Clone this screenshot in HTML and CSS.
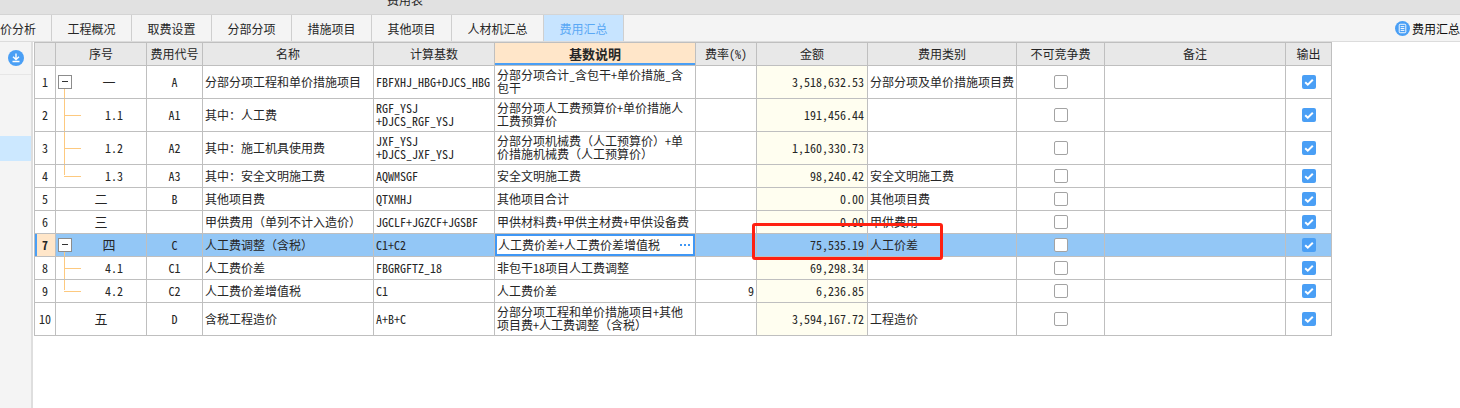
FILE: index.html
```html
<!DOCTYPE html>
<html lang="zh-CN">
<head>
<meta charset="utf-8">
<title>费用汇总</title>
<link rel="stylesheet" href="styles.css">
</head>
<body>
<div class="app">
  <div class="titlebar"><span class="title">费用表</span></div>
  <nav class="tabs">
    <span class="tab tab-first">价分析</span>
    <span class="tab">工程概况</span>
    <span class="tab">取费设置</span>
    <span class="tab">分部分项</span>
    <span class="tab">措施项目</span>
    <span class="tab">其他项目</span>
    <span class="tab tab-wide">人材机汇总</span>
    <span class="tab tab-active">费用汇总</span>
    <span class="tool">
      <svg class="tool-icon" viewBox="0 0 16 16"><circle cx="8" cy="8" r="8" fill="#4a9ff5"/><rect x="4.5" y="3.5" width="7" height="9" rx="1" fill="none" stroke="#fff"/><path d="M6 6h4M6 8h4M6 10h4" stroke="#fff"/></svg>费用汇总
    </span>
  </nav>
  <div class="main">
    <aside class="side">
      <div class="side-top">
        <svg class="side-icon" viewBox="0 0 16 16"><circle cx="8" cy="8" r="8" fill="#4a9ff5"/><path d="M8 3.5v5.5M5 6.8L8 9.5l3-2.7M4.5 11.5h7" fill="none" stroke="#fff" stroke-width="1.4"/></svg>
      </div>
      <div class="side-sel"></div>
    </aside>
    <div class="grid-wrap">
      <table class="grid">
        <colgroup>
          <col class="c-n"><col class="c-seq"><col class="c-code"><col class="c-name"><col class="c-base"><col class="c-desc"><col class="c-rate"><col class="c-amt"><col class="c-type"><col class="c-nc"><col class="c-note"><col class="c-out">
        </colgroup>
        <thead>
          <tr class="r-s">
            <th></th><th>序号</th><th>费用代号</th><th>名称</th><th>计算基数</th><th class="th-sel">基数说明</th><th>费率(%)</th><th>金额</th><th>费用类别</th><th>不可竞争费</th><th>备注</th><th>输出</th>
          </tr>
        </thead>
        <tbody>
          <tr class="r-t">
            <td class="num">1</td>
            <td class="seq seq-box"><span class="box"></span><span class="tl-down"></span>一</td>
            <td class="ctr">A</td><td>分部分项工程和单价措施项目</td><td>FBFXHJ_HBG+DJCS_HBG</td><td>分部分项合计_含包干+单价措施_含<br>包干</td><td></td>
            <td class="amt">3,518,632.53</td><td>分部分项及单价措施项目费</td>
            <td class="ctr"><span class="cb"></span></td><td></td>
            <td class="ctr"><span class="cb cb-on"><svg viewBox="0 0 14 14"><path d="M3.2 7.2l2.6 2.5 5-5" fill="none" stroke="#fff" stroke-width="2"/></svg></span></td>
          </tr>
          <tr class="r-t">
            <td class="num">2</td>
            <td class="seq seq-sub"><span class="tl-full"></span><span class="tl-h"></span>1.1</td>
            <td class="ctr">A1</td><td>其中<span class="fw">&#xFF1A;</span>人工费</td><td>RGF_YSJ<br>+DJCS_RGF_YSJ</td><td>分部分项人工费预算价+单价措施人<br>工费预算价</td><td></td>
            <td class="amt">191,456.44</td><td></td>
            <td class="ctr"><span class="cb"></span></td><td></td>
            <td class="ctr"><span class="cb cb-on"><svg viewBox="0 0 14 14"><path d="M3.2 7.2l2.6 2.5 5-5" fill="none" stroke="#fff" stroke-width="2"/></svg></span></td>
          </tr>
          <tr class="r-t">
            <td class="num">3</td>
            <td class="seq seq-sub"><span class="tl-full"></span><span class="tl-h"></span>1.2</td>
            <td class="ctr">A2</td><td>其中<span class="fw">&#xFF1A;</span>施工机具使用费</td><td>JXF_YSJ<br>+DJCS_JXF_YSJ</td><td>分部分项机械费<span class="fw">&#xFF08;</span>人工预算价<span class="fw">&#xFF09;</span>+单<br>价措施机械费<span class="fw">&#xFF08;</span>人工预算价<span class="fw">&#xFF09;</span></td><td></td>
            <td class="amt">1,160,330.73</td><td></td>
            <td class="ctr"><span class="cb"></span></td><td></td>
            <td class="ctr"><span class="cb cb-on"><svg viewBox="0 0 14 14"><path d="M3.2 7.2l2.6 2.5 5-5" fill="none" stroke="#fff" stroke-width="2"/></svg></span></td>
          </tr>
          <tr class="r-s">
            <td class="num">4</td>
            <td class="seq seq-sub"><span class="tl-up"></span><span class="tl-h"></span>1.3</td>
            <td class="ctr">A3</td><td>其中<span class="fw">&#xFF1A;</span>安全文明施工费</td><td>AQWMSGF</td><td>安全文明施工费</td><td></td>
            <td class="amt">98,240.42</td><td>安全文明施工费</td>
            <td class="ctr"><span class="cb"></span></td><td></td>
            <td class="ctr"><span class="cb cb-on"><svg viewBox="0 0 14 14"><path d="M3.2 7.2l2.6 2.5 5-5" fill="none" stroke="#fff" stroke-width="2"/></svg></span></td>
          </tr>
          <tr class="r-s">
            <td class="num">5</td><td class="ctr big">二</td>
            <td class="ctr">B</td><td>其他项目费</td><td>QTXMHJ</td><td>其他项目合计</td><td></td>
            <td class="amt">0.00</td><td>其他项目费</td>
            <td class="ctr"><span class="cb"></span></td><td></td>
            <td class="ctr"><span class="cb cb-on"><svg viewBox="0 0 14 14"><path d="M3.2 7.2l2.6 2.5 5-5" fill="none" stroke="#fff" stroke-width="2"/></svg></span></td>
          </tr>
          <tr class="r-s">
            <td class="num">6</td><td class="ctr big">三</td>
            <td class="ctr"></td><td>甲供费用<span class="fw">&#xFF08;</span>单列不计入造价<span class="fw">&#xFF09;</span></td><td>JGCLF+JGZCF+JGSBF</td><td>甲供材料费+甲供主材费+甲供设备费</td><td></td>
            <td class="amt">0.00</td><td>甲供费用</td>
            <td class="ctr"><span class="cb"></span></td><td></td>
            <td class="ctr"><span class="cb cb-on"><svg viewBox="0 0 14 14"><path d="M3.2 7.2l2.6 2.5 5-5" fill="none" stroke="#fff" stroke-width="2"/></svg></span></td>
          </tr>
          <tr class="r-s r-sel">
            <td class="num num-sel">7</td>
            <td class="seq seq-box"><span class="box"></span><span class="tl-down"></span>四</td>
            <td class="ctr">C</td><td>人工费调整<span class="fw">&#xFF08;</span>含税<span class="fw">&#xFF09;</span></td><td>C1+C2</td>
            <td class="cell-active"><span class="active-box">人工费价差+人工费价差增值税<span class="dots"></span></span></td><td></td>
            <td class="amt">75,535.19</td><td>人工价差</td>
            <td class="ctr"><span class="cb"></span></td><td></td>
            <td class="ctr"><span class="cb cb-on"><svg viewBox="0 0 14 14"><path d="M3.2 7.2l2.6 2.5 5-5" fill="none" stroke="#fff" stroke-width="2"/></svg></span></td>
          </tr>
          <tr class="r-s">
            <td class="num">8</td>
            <td class="seq seq-sub"><span class="tl-full"></span><span class="tl-h"></span>4.1</td>
            <td class="ctr">C1</td><td>人工费价差</td><td>FBGRGFTZ_18</td><td>非包干18项目人工费调整</td><td></td>
            <td class="amt">69,298.34</td><td></td>
            <td class="ctr"><span class="cb"></span></td><td></td>
            <td class="ctr"><span class="cb cb-on"><svg viewBox="0 0 14 14"><path d="M3.2 7.2l2.6 2.5 5-5" fill="none" stroke="#fff" stroke-width="2"/></svg></span></td>
          </tr>
          <tr class="r-s">
            <td class="num">9</td>
            <td class="seq seq-sub"><span class="tl-up"></span><span class="tl-h"></span>4.2</td>
            <td class="ctr">C2</td><td>人工费价差增值税</td><td>C1</td><td>人工费价差</td><td class="rate">9</td>
            <td class="amt">6,236.85</td><td></td>
            <td class="ctr"><span class="cb"></span></td><td></td>
            <td class="ctr"><span class="cb cb-on"><svg viewBox="0 0 14 14"><path d="M3.2 7.2l2.6 2.5 5-5" fill="none" stroke="#fff" stroke-width="2"/></svg></span></td>
          </tr>
          <tr class="r-t">
            <td class="num">10</td><td class="ctr big">五</td>
            <td class="ctr">D</td><td>含税工程造价</td><td>A+B+C</td><td>分部分项工程和单价措施项目+其他<br>项目费+人工费调整<span class="fw">&#xFF08;</span>含税<span class="fw">&#xFF09;</span></td><td></td>
            <td class="amt">3,594,167.72</td><td>工程造价</td>
            <td class="ctr"><span class="cb"></span></td><td></td>
            <td class="ctr"><span class="cb cb-on"><svg viewBox="0 0 14 14"><path d="M3.2 7.2l2.6 2.5 5-5" fill="none" stroke="#fff" stroke-width="2"/></svg></span></td>
          </tr>
        </tbody>
      </table>
      <div class="red-mark"></div>
    </div>
  </div>
</div>
</body>
</html>
```

FILE: styles.css
```css
* { box-sizing: border-box; }
html, body { margin: 0; padding: 0; background: #fff; }
body {
  font-family: "Noto Sans CJK SC", "Liberation Mono", sans-serif;
  font-feature-settings: "hwid";
  font-size: 12px;
  color: #262626;
  overflow: hidden;
}
.fw { font-feature-settings: normal; }
.app { width: 1460px; height: 408px; display: flex; flex-direction: column; overflow: hidden; }

.titlebar { height: 15px; background: #e1e1e1; border-bottom: 1px solid #d4d4d4; padding-left: 387px; line-height: 12px; overflow: hidden; flex: none; }
.title { display: block; margin-top: -6px; }

.tabs { height: 27px; flex: none; display: flex; background: #f4f4f4; border-bottom: 1px solid #dcdcdc; line-height: 27px; }
.tab { width: 80px; text-align: center; border-right: 1px solid #cfcfcf; white-space: nowrap; }
.tab-first { width: 52px; text-align: right; padding-right: 15px; }
.tab-wide { width: 92px; }
.tab-active { background: #c7e4ff; color: #5aa8f5; }
.tool { margin-left: auto; display: flex; align-items: center; gap: 2px; color: #111; }
.tool-icon { width: 15px; height: 15px; }

.main { flex: 1; display: flex; min-height: 0; }
.side { width: 33px; flex: none; background: #f4f4f4; border-right: 2px solid #dedede; }
.side-top { height: 33px; border-bottom: 1px solid #e6e6e6; display: flex; justify-content: center; align-items: center; }
.side-icon { width: 16px; height: 16px; margin-left: 1px; }
.side-sel { height: 25px; margin-top: 61px; background: #cce8ff; }

.grid-wrap { position: relative; flex: 1; padding-left: 1px; }
.grid { border-collapse: collapse; table-layout: fixed; width: 1298px; }
.c-n { width: 21px; } .c-seq { width: 91px; } .c-code { width: 56px; } .c-name { width: 171px; }
.c-base { width: 121px; } .c-desc { width: 201px; } .c-rate { width: 61px; } .c-amt { width: 111px; }
.c-type { width: 149px; } .c-nc { width: 88px; } .c-note { width: 181px; } .c-out { width: 46px; }

.grid th, .grid td { border: 1px solid #bfbfbf; padding: 0 2px 2px; line-height: 13px; overflow: hidden; white-space: nowrap; }
.grid th { background: #e8e8e8; font-weight: 400; text-align: center; }
.grid th.th-sel { background: #ffe6c9; font-weight: 700; font-size: 13px; box-shadow: inset 0 -2px 0 #4a9ff5; }
.r-s { height: 23px; }
.r-t { height: 33px; }

.num { text-align: center; }
.ctr { text-align: center; }
.amt { text-align: right; background: #fffef0; padding-right: 3px !important; }
.rate { text-align: right; padding-right: 2px !important; }
.big { font-size: 13px; }

.seq { position: relative; text-align: center; }
.seq-box { padding-left: 18px !important; font-size: 13px; }
.seq-sub { padding-left: 28px !important; }
.box { position: absolute; left: 2px; top: 50%; margin-top: -7px; width: 14px; height: 14px; background: #fff; border: 1px solid #8c8c8c; z-index: 1; }
.box::after { content: ""; position: absolute; left: 3px; right: 3px; top: 5px; height: 1px; background: #333; }
.tl-down, .tl-full, .tl-up, .tl-h { position: absolute; background: #fdc97f; }
.tl-down { left: 8px; width: 1px; top: 50%; bottom: -1px; }
.tl-full { left: 8px; width: 1px; top: -1px; bottom: -1px; }
.tl-up { left: 8px; width: 1px; top: -1px; height: 50%; }
.tl-h { left: 8px; width: 17px; height: 1px; top: 50%; }

.r-sel td { background: #93c7f6; }
.grid td.num-sel { background: #ffe6c9; font-weight: 700; box-shadow: inset 2px 0 0 #4a9ff5; }
.grid td.cell-active { padding: 0; }
.active-box { display: flex; justify-content: space-between; align-items: center; height: 22px; background: #fff; border: 2px solid #3f97f5; padding: 0 3px 2px 1px; }
.dots { width: 10px; height: 2px; margin-top: 2px; background: repeating-linear-gradient(90deg, #3f97f5 0 2px, transparent 2px 4px); }

.cb { display: inline-block; vertical-align: middle; width: 14px; height: 14px; margin-top: 2px; background: #fff; border: 1px solid #a3a3a3; border-radius: 2px; }
.cb-on { background: #4a9ff5; border: 0; }
.cb-on svg { display: block; width: 14px; height: 14px; }

.red-mark { position: absolute; left: 719px; top: 181px; width: 191px; height: 37px; border: 3px solid #ff2010; border-radius: 3px; pointer-events: none; }
```
